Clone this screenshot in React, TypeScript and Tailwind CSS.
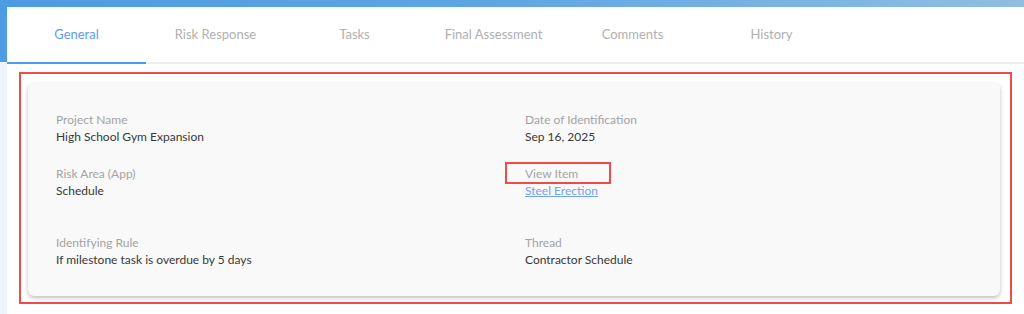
import React from "react";

const tabs = ["General", "Risk Response", "Tasks", "Final Assessment", "Comments", "History"];

function Field({ label, value, link }: { label: string; value: string; link?: boolean }) {
  return (
    <div className="flex flex-col">
      <div className="text-[12px] leading-[17px] text-[#a3a3a3]">{label}</div>
      {link ? (
        <a className="text-[12px] leading-[17px] text-[#6ea2f2] underline">{value}</a>
      ) : (
        <div className="text-[12px] leading-[17px] text-[#383838]">{value}</div>
      )}
    </div>
  );
}

export default function App() {
  return (
    <div
      className="w-[1024px] h-[314px] overflow-hidden bg-[#eef3fc] flex flex-col"
      style={{ fontFamily: "Lato, 'Noto Sans', sans-serif" }}
    >
      <div className="h-[7px] shrink-0 bg-gradient-to-r from-[#4d9be2] via-[#5fa6e2] to-[#8fbfe2]" />
      <div className="flex flex-1">
        <div className="w-[7px] shrink-0 flex flex-col">
          <div className="h-[55px] bg-[#4d9be2]" />
          <div className="flex-1 bg-[#eef3fc]" />
        </div>
        <div className="flex-1 bg-white rounded-tl-[8px] flex flex-col relative">
          <div className="h-[57px] flex border-b-2 border-[#eeeeee]">
            {tabs.map((t, i) => (
              <div
                key={t}
                className={
                  i === 0
                    ? "w-[139px] flex items-center justify-center text-[13px] text-[#5c9cf0] border-b-2 border-[#4a9bf2] -mb-[2px]"
                    : "w-[139px] flex items-center justify-center text-[13px] text-[#b0b0b0]"
                }
              >
                {t}
              </div>
            ))}
          </div>
          <div className="pl-[12px] pr-[12px] pt-[8px]">
            <div className="border-2 border-[#f04a4a] w-[993px] h-[232px] pl-[7px] pt-[9px] pr-[10px]">
              <div className="bg-[#f9f9f9] rounded-[6px] h-[213px] shadow-[0_2px_4px_rgba(0,0,0,0.25)] pl-[28px] pt-[28px] grid grid-cols-[469px_1fr]">
                <div className="flex flex-col">
                  <Field label="Project Name" value="High School Gym Expansion" />
                  <div className="h-[20px]" />
                  <Field label="Risk Area (App)" value="Schedule" />
                  <div className="h-[35px]" />
                  <Field label="Identifying Rule" value="If milestone task is overdue by 5 days" />
                </div>
                <div className="flex flex-col">
                  <Field label="Date of Identification" value="Sep 16, 2025" />
                  <div className="h-[20px]" />
                  <div className="flex flex-col">
                    <div className="text-[12px] leading-[17px] text-[#a3a3a3] relative">
                      View Item
                      <div className="absolute left-[-20px] top-[-3px] w-[106px] h-[22px] border-2 border-[#f04a4a]" />
                    </div>
                    <a className="text-[12px] leading-[17px] text-[#6ea2f2] underline">Steel Erection</a>
                  </div>
                  <div className="h-[35px]" />
                  <Field label="Thread" value="Contractor Schedule" />
                </div>
              </div>
            </div>
          </div>
        </div>
      </div>
    </div>
  );
}
